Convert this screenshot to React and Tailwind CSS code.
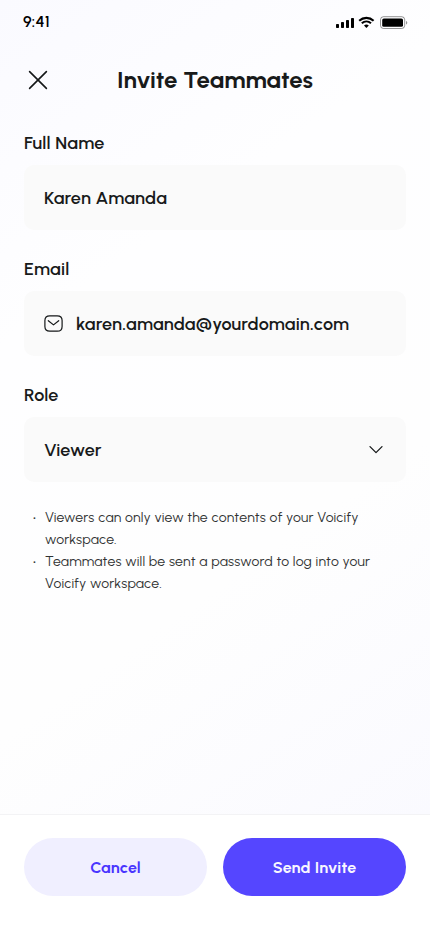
function StatusBar() {
  return (
    <div className="flex h-11 shrink-0 items-center justify-between pl-[23px] pr-[22px]">
      <span className="text-[16px] leading-5 font-semibold tracking-[0.2px] text-black">9:41</span>
      <svg width="72" height="14" viewBox="0 0 72 14" fill="none" className="mt-[2px]">
        <rect x="0" y="8" width="3" height="4" rx="0.7" fill="#000" />
        <rect x="5" y="6" width="3" height="6" rx="0.7" fill="#000" />
        <rect x="10" y="4" width="3" height="8" rx="0.7" fill="#000" />
        <rect x="15" y="2" width="3" height="10" rx="0.7" fill="#000" />
        <path d="M23.2 4.7C27.3 0.9 33.5 0.9 37.6 4.7" stroke="#000" strokeWidth="2.1" />
        <path d="M25.8 7.3C28.500 4.8 32.300 4.8 35 7.3" stroke="#000" strokeWidth="2" />
        <path d="M28 9.4C29.4 8.2 31.4 8.2 32.8 9.4L30.4 11.9Z" fill="#000" />
        <rect x="44.5" y="0.7" width="24.2" height="11.8" rx="3" stroke="#000" strokeOpacity="0.42" />
        <rect x="46.2" y="2.4" width="20.8" height="8.4" rx="1.6" fill="#000" />
        <path d="M70 5v3.6c.8-.3 1.3-1 1.3-1.8S70.800 5.300 70 5Z" fill="#000" fillOpacity="0.42" />
      </svg>
    </div>
  );
}

function Field({ label, children }) {
  return (
    <div className="flex flex-col text-[18px] leading-[27px] font-semibold tracking-[0.2px]">
      <div className="mb-2 h-7 pt-px">{label}</div>
      <div className="flex h-[65px] items-center rounded-[10px] bg-[#fafafa] px-5">{children}</div>
    </div>
  );
}

export default function App() {
  return (
    <div className="flex h-[932px] w-[430px] flex-col overflow-hidden bg-[linear-gradient(145deg,#fafaff_0%,#fefeff_28%,#fefefe_60%,#f9f9ff_98%)] font-['Urbanist','Lato',sans-serif] text-[#181a1a]">
      <StatusBar />
      <header className="grid h-[72px] shrink-0 grid-cols-[52px_1fr_52px] items-center px-6">
        <svg width="28" height="28" viewBox="0 0 28 28" fill="none" stroke="#141718" strokeWidth="1.6" strokeLinecap="round">
          <path d="M5.6 5.600 22.400 22.400M22.400 5.600 5.600 22.400" />
        </svg>
        <h1 className="text-center text-[24px] leading-[36px] font-bold whitespace-nowrap">Invite Teammates</h1>
      </header>
      <main className="flex grow flex-col px-6 pt-[13px]">
        <div className="flex flex-col gap-[25px]">
          <Field label="Full Name">
            <span className="pt-[2px]">Karen Amanda</span>
          </Field>
          <Field label="Email">
            <svg width="20" height="20" viewBox="0 0 20 20" fill="none" stroke="#141718" strokeWidth="1.2" strokeLinecap="round" strokeLinejoin="round" className="mr-3">
              <path d="M5.800 1.800H13.200C16.500 1.800 18.100 3.500 18.100 6.600V12.400C18.100 15.500 16.500 17.200 13.200 17.200H5.800C2.500 17.200 0.900 15.500 0.900 12.400V6.600C0.900 3.500 2.500 1.800 5.800 1.800Z" />
              <path d="M4.300 6.700 9.500 10.900 14.700 6.700" />
            </svg>
            <span className="pt-[2px]">karen.amanda@yourdomain.com</span>
          </Field>
          <Field label="Role">
            <span className="grow pt-[2px]">Viewer</span>
            <svg width="20" height="20" viewBox="0 0 20 20" fill="none" stroke="#141718" strokeWidth="1.3" strokeLinecap="round" strokeLinejoin="round">
              <path d="M4 6.600 10 12.600 16 6.600" />
            </svg>
          </Field>
        </div>
        <ul className="mt-[25px] flex flex-col pl-[9px] text-[14px] leading-[22px] tracking-[0.2px] text-[#303232]">
          <li className="flex">
            <span className="w-3 font-bold">·</span>
            <span>Viewers can only view the contents of your Voicify<br />workspace.</span>
          </li>
          <li className="flex">
            <span className="w-3 font-bold">·</span>
            <span>Teammates will be sent a password to log into your<br />Voicify workspace.</span>
          </li>
        </ul>
      </main>
      <footer className="flex h-[118px] shrink-0 gap-4 border-t border-[#f3f3f5] bg-white px-6 pt-[23px] text-[16px] leading-6 font-bold tracking-[0.2px]">
        <button className="h-[58px] flex-1 rounded-full bg-[#f0efff] pt-[2px] text-[#4935ff]">Cancel</button>
        <button className="h-[58px] flex-1 rounded-full bg-[#5546ff] pt-[2px] text-[#f8f7ff]">Send Invite</button>
      </footer>
    </div>
  );
}
